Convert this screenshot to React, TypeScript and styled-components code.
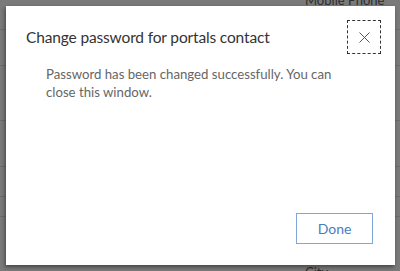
import React from 'react';
import styled, { createGlobalStyle } from 'styled-components';

const GlobalStyle = createGlobalStyle`
  html, body {
    margin: 0;
    padding: 0;
    background: #7a7a7a;
  }
  body {
    font-family: Lato, "Noto Sans", "Liberation Sans", sans-serif;
  }
`;

const Page = styled.div`
  position: relative;
  width: 400px;
  height: 271px;
  overflow: hidden;
  background: #7a7a7a;
`;

const Backdrop = styled.div`
  display: flex;
  flex-direction: column;
  height: 100%;
`;

const Row = styled.div<{ $h: number }>`
  height: ${(p) => p.$h}px;
  flex-shrink: 0;
  border-bottom: 1px solid #6c6c6c;
  box-sizing: border-box;
  padding-left: 305px;
`;

const FieldLabel = styled.span<{ $shift: number }>`
  display: block;
  font-size: 13px;
  color: #2e2e2e;
  line-height: 14px;
  margin-top: ${(p) => p.$shift}px;
`;

const Dialog = styled.div`
  position: absolute;
  left: 6px;
  top: 6px;
  width: 389px;
  height: 259px;
  background: #fff;
  box-shadow: -1px 2px 4px rgba(0, 0, 0, 0.45);
  display: flex;
  flex-direction: column;
  box-sizing: border-box;
  padding: 14px 14px 21px 20px;
`;

const Header = styled.div`
  display: flex;
  align-items: center;
  justify-content: space-between;
`;

const Title = styled.h1`
  margin: 0;
  font-size: 15.5px;
  font-weight: 400;
  letter-spacing: -0.15px;
  color: #333;
`;

const CloseButton = styled.button`
  width: 34px;
  height: 34px;
  border: 1px dashed #333;
  background: transparent;
  padding: 0;
  display: flex;
  align-items: center;
  justify-content: center;
  cursor: pointer;
`;

const Message = styled.p`
  margin: 11px 20px 0 20px;
  font-size: 13.2px;
  line-height: 18px;
  color: #666;
  max-width: 300px;
`;

const Footer = styled.div`
  margin-top: auto;
  display: flex;
  justify-content: flex-end;
  padding-right: 8px;
`;

const DoneButton = styled.button`
  width: 77px;
  height: 31px;
  border: 1px solid #7fa7da;
  background: #fff;
  color: #4b7cc0;
  font-family: inherit;
  font-size: 14px;
  cursor: pointer;
`;

export default function App() {
  return (
    <Page>
      <GlobalStyle />
      <Backdrop>
        <Row $h={30}>
          <FieldLabel $shift={-7}>Mobile Phone</FieldLabel>
        </Row>
        <Row $h={36} />
        <Row $h={55} />
        <Row $h={46} />
        <Row $h={30} />
        <Row $h={20} />
        <Row $h={60}>
          <FieldLabel $shift={48}>City</FieldLabel>
        </Row>
      </Backdrop>
      <Dialog>
        <Header>
          <Title>Change password for portals contact</Title>
          <CloseButton aria-label="Close">
            <svg width="11" height="11" viewBox="0 0 11 11">
              <path d="M0.5 0.5 L10.5 10.5 M10.5 0.5 L0.5 10.5" stroke="#555" strokeWidth="1" />
            </svg>
          </CloseButton>
        </Header>
        <Message>Password has been changed successfully. You can close this window.</Message>
        <Footer>
          <DoneButton>Done</DoneButton>
        </Footer>
      </Dialog>
    </Page>
  );
}
